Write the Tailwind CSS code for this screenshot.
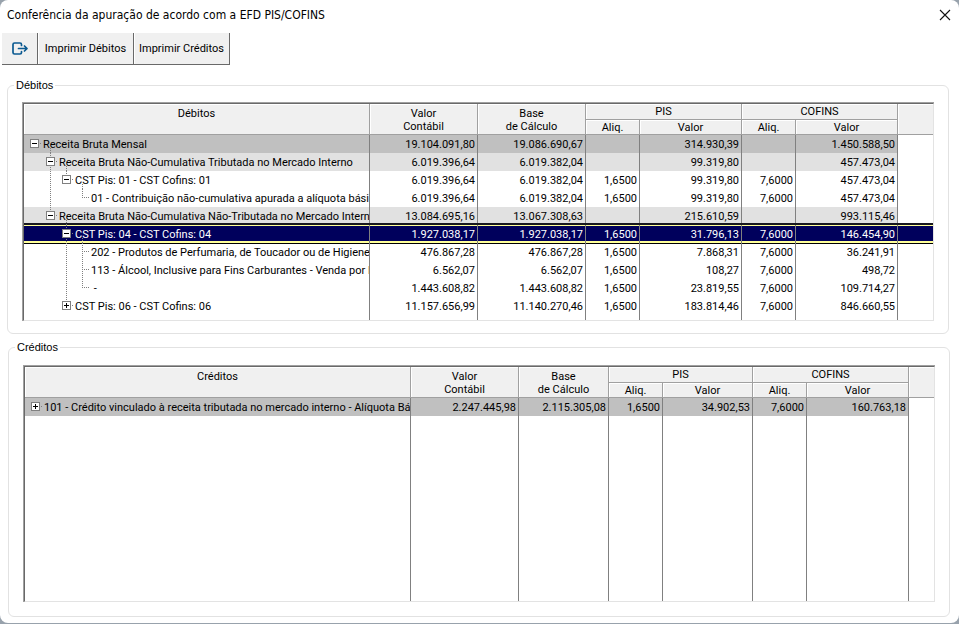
<!DOCTYPE html>
<html lang="pt-BR">
<head>
    <meta charset="UTF-8">
    <meta name="viewport" content="width=device-width, initial-scale=1.0">
    <title>Conferência da apuração</title>
    <script src="https://cdn.jsdelivr.net/npm/@tailwindcss/browser@4"></script>
</head>
<body class="bg-[#98a2ac] min-h-screen flex flex-col text-black font-[Roboto,'Liberation_Sans',sans-serif] text-[11px]">
    <!-- Tree glyphs, one 16x18 slot each -->
    <svg class="hidden" aria-hidden="true">
        <symbol id="box" viewBox="0 0 16 18">
            <path d="M13.5 8v1" stroke="#808080"/>
            <rect x="3.5" y="4.5" width="8" height="8" fill="#fff" stroke="#808080"/>
            <path d="M5 8.5h5" stroke="#000"/>
        </symbol>
        <symbol id="plus" viewBox="0 0 16 18">
            <use href="#box"/>
            <path d="M7.5 6v5" stroke="#000"/>
        </symbol>
        <symbol id="up" viewBox="0 0 16 18">
            <path d="M7.5 0v9" stroke="#808080" stroke-dasharray="1 1"/>
        </symbol>
        <symbol id="line" viewBox="0 0 16 18">
            <path d="M7.5 0v18" stroke="#808080" stroke-dasharray="1 1"/>
        </symbol>
        <symbol id="arm" viewBox="0 0 16 18">
            <path d="M9 8.5h6" stroke="#808080" stroke-dasharray="1 1"/>
        </symbol>
    </svg>

    <div class="grow mb-px flex flex-col bg-white rounded-lg">
        <!-- Title bar -->
        <header class="flex items-center justify-between h-[33px] pl-[7px] pr-2 pb-1">
            <h1 class="text-[12px] font-['DejaVu_Sans_Condensed','Liberation_Sans',sans-serif]">Conferência da apuração de acordo com a EFD PIS/COFINS</h1>
            <button type="button" aria-label="Fechar" class="flex items-center justify-center w-3 h-3">
                <svg class="w-3 h-3" viewBox="0 0 12 12" fill="none" stroke="#111" stroke-width="1.1"><path d="M1 1l10 10M11 1L1 11"/></svg>
            </button>
        </header>

        <!-- Toolbar -->
        <div class="flex h-8 pl-0.5 whitespace-nowrap">
            <button type="button" aria-label="Sair" class="flex items-center justify-center w-9 bg-[#f0f0f0] border-r border-b border-[#696969]">
                <svg class="w-4 h-4" viewBox="0 0 16 16" fill="none" stroke="#0b5a91" stroke-width="1.7" stroke-linecap="round" stroke-linejoin="round">
                    <path d="M9.500 4.500V3.500Q9.500 2 8 2H2.500Q1 2 1 3.500V11.500Q1 13 2.500 13H8Q9.500 13 9.500 11.500V10.500"/>
                    <path d="M6.500 7.500H15M12.500 5L15 7.500L12.500 10"/>
                </svg>
            </button>
            <button type="button" class="w-24 pt-0.5 bg-[#f0f0f0] border-r border-b border-[#696969] shadow-[inset_1px_0_#fff]">Imprimir Débitos</button>
            <button type="button" class="w-24 pt-0.5 bg-[#f0f0f0] border-r border-b border-[#696969] shadow-[inset_1px_0_#fff]">Imprimir Créditos</button>
        </div>

        <main class="flex flex-col gap-[6px] pt-[13px] pb-[6px]">
            <!-- Débitos -->
            <fieldset class="ml-[7px] mr-2.5 pl-[14px] pr-[14px] pt-[9px] pb-3 border border-[#e2e2e2] rounded-md">
                <legend class="-ml-2 px-0.5 leading-[15px] font-['Liberation_Sans',sans-serif]">Débitos</legend>
                <div class="border-t border-l border-[#a0a0a0]">
                    <div class="border-t border-l border-t-[#696969] border-l-[#696969] border-r border-b border-r-[#e3e3e3] border-b-[#e3e3e3]">
                        <table class="w-full table-fixed border-separate border-spacing-0">
                            <colgroup>
                                <col><col class="w-[108px]"><col class="w-[108px]"><col class="w-[54px]"><col class="w-[102px]"><col class="w-[54px]"><col class="w-[102px]"><col class="w-[35px]">
                            </colgroup>
                            <thead data-title="Débitos"></thead>
                            <tbody id="debitos"></tbody>
                            <tfoot><tr class="h-[5px]"></tr></tfoot>
                        </table>
                    </div>
                </div>
            </fieldset>

            <!-- Créditos -->
            <fieldset class="ml-2 mr-[9px] pl-[14px] pr-[14px] pt-[10px] pb-[14px] border border-[#e2e2e2] rounded-md">
                <legend class="-ml-2 px-0.5 leading-[15px] font-['Liberation_Sans',sans-serif]">Créditos</legend>
                <div class="border-t border-l border-[#a0a0a0]">
                    <div class="border-t border-l border-t-[#696969] border-l-[#696969] border-r border-b border-r-[#e3e3e3] border-b-[#e3e3e3]">
                        <table class="w-full table-fixed border-separate border-spacing-0">
                            <colgroup>
                                <col><col class="w-[108px]"><col class="w-[90px]"><col class="w-[54px]"><col class="w-[90px]"><col class="w-[54px]"><col class="w-[102px]"><col class="w-[25px]">
                            </colgroup>
                            <thead data-title="Créditos"></thead>
                            <tbody id="creditos"></tbody>
                            <tfoot><tr class="h-[185px]"></tr></tfoot>
                        </table>
                    </div>
                </div>
            </fieldset>
        </main>
    </div>

    <script>
        const headCell = 'p-0 font-normal leading-[13px] bg-[#f0f0f0] border-r border-b border-[#a0a0a0] shadow-[inset_1px_1px_#fff]';

        // tree: glyphs per slot, open: has visible children below
        const debitos = [
            { tree: ['box'], open: true, tone: 'bg-[#c0c0c0]', text: 'Receita Bruta Mensal', values: ['19.104.091,80', '19.086.690,67', '', '314.930,39', '', '1.450.588,50'] },
            { tree: ['', 'line box'], open: true, tone: 'bg-[#e1e1e1]', text: 'Receita Bruta Não-Cumulativa Tributada no Mercado Interno', values: ['6.019.396,64', '6.019.382,04', '', '99.319,80', '', '457.473,04'] },
            { tree: ['', 'line', 'up box'], open: true, text: 'CST Pis: 01 - CST Cofins: 01', values: ['6.019.396,64', '6.019.382,04', '1,6500', '99.319,80', '7,6000', '457.473,04'] },
            { tree: ['', 'line', '', 'up arm'], text: '01 - Contribuição não-cumulativa apurada a alíquota básica', values: ['6.019.396,64', '6.019.382,04', '1,6500', '99.319,80', '7,6000', '457.473,04'] },
            { tree: ['', 'up box'], open: true, tone: 'bg-[#e1e1e1]', text: 'Receita Bruta Não-Cumulativa Não-Tributada no Mercado Interno', values: ['13.084.695,16', '13.067.308,63', '', '215.610,59', '', '993.115,46'] },
            { tree: ['', '', 'line box'], open: true, selected: true, text: 'CST Pis: 04 - CST Cofins: 04', values: ['1.927.038,17', '1.927.038,17', '1,6500', '31.796,13', '7,6000', '146.454,90'] },
            { tree: ['', '', 'line', 'line arm'], text: '202 - Produtos de Perfumaria, de Toucador ou de Higiene Pessoal', values: ['476.867,28', '476.867,28', '1,6500', '7.868,31', '7,6000', '36.241,91'] },
            { tree: ['', '', 'line', 'line arm'], text: '113 - Álcool, Inclusive para Fins Carburantes - Venda por Distribuidor', values: ['6.562,07', '6.562,07', '1,6500', '108,27', '7,6000', '498,72'] },
            { tree: ['', '', 'line', 'up arm'], text: '\u00a0-', values: ['1.443.608,82', '1.443.608,82', '1,6500', '23.819,55', '7,6000', '109.714,27'] },
            { tree: ['', '', 'up plus'], text: 'CST Pis: 06 - CST Cofins: 06', values: ['11.157.656,99', '11.140.270,46', '1,6500', '183.814,46', '7,6000', '846.660,55'] }
        ];

        const creditos = [
            { tree: ['plus'], tone: 'bg-[#c0c0c0]', text: '101 - Crédito vinculado à receita tributada no mercado interno - Alíquota Básica', values: ['2.247.445,98', '2.115.305,08', '1,6500', '34.902,53', '7,6000', '160.763,18'] }
        ];

        function slot(glyphs) {
            const uses = glyphs.split(' ').filter(Boolean).map(g => `<use href="#${g}"/>`).join('');
            return `<svg class="w-4 h-[18px] shrink-0" viewBox="0 0 16 18" shape-rendering="crispEdges">${uses}</svg>`;
        }

        function row(r) {
            const tone = r.selected
                ? 'bg-[#00005c] text-white shadow-[inset_0_1px_#ffff99,inset_0_-2px_#ffff99,0_-2px_#18181f,0_1px_#000]'
                : (r.tone || '');
            const child = r.open
                ? '<svg class="absolute left-0 top-0 w-4 h-[18px]" viewBox="0 0 16 18" shape-rendering="crispEdges"><path d="M7.5 13v5" stroke="#808080" stroke-dasharray="1 1"/></svg>'
                : '';
            return `
                <tr class="h-[18px] leading-4">
                    <td class="p-0 border-r border-[#808080] ${tone}">
                        <div class="flex h-[18px] pl-[3px] overflow-hidden whitespace-nowrap">
                            ${r.tree.map(slot).join('')}
                            <span class="relative shrink-0 pt-0.5">${r.text}${child}</span>
                        </div>
                    </td>
                    ${r.values.map(v => `<td class="p-0 pt-0.5 pr-0.5 h-[18px] text-right border-r border-[#808080] ${tone}">${v}</td>`).join('')}
                    <td class="p-0 ${r.selected ? tone : ''}"></td>
                </tr>`;
        }

        function head(title) {
            return `
                <tr class="h-4">
                    <th rowspan="2" class="${headCell} pt-[3px] align-top">${title}</th>
                    <th rowspan="2" class="${headCell} pt-[3px] align-top">Valor<br>Contábil</th>
                    <th rowspan="2" class="${headCell} pt-[3px] align-top">Base<br>de Cálculo</th>
                    <th colspan="2" class="${headCell}">PIS</th>
                    <th colspan="2" class="${headCell}">COFINS</th>
                    <td rowspan="2" class="p-0 bg-[#f0f0f0] border-b border-[#a0a0a0] shadow-[inset_1px_1px_#fff]"></td>
                </tr>
                <tr class="h-[15px]">
                    <th class="${headCell}">Aliq.</th>
                    <th class="${headCell}">Valor</th>
                    <th class="${headCell}">Aliq.</th>
                    <th class="${headCell}">Valor</th>
                </tr>`;
        }

        document.querySelectorAll('thead').forEach(el => { el.innerHTML = head(el.dataset.title); });
        document.querySelectorAll('tfoot tr').forEach(el => {
            el.innerHTML = '<td class="p-0 border-r border-[#808080]"></td>'.repeat(7) + '<td class="p-0"></td>';
        });
        document.getElementById('debitos').innerHTML = debitos.map(row).join('');
        document.getElementById('creditos').innerHTML = creditos.map(row).join('');
    </script>
</body>
</html>
